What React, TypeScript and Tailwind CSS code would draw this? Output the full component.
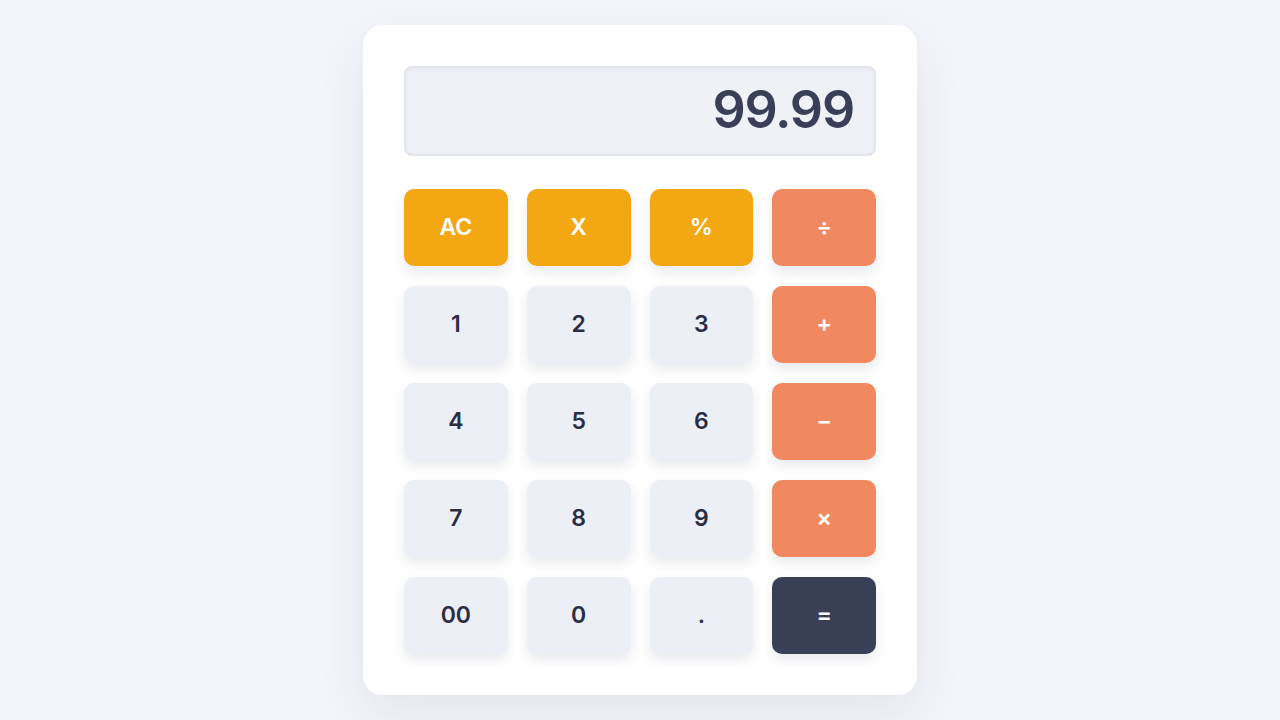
import React from "react";

type Key = { label: string; kind: "fn" | "op" | "num" | "eq" };

const keys: Key[] = [
  { label: "AC", kind: "fn" },
  { label: "X", kind: "fn" },
  { label: "%", kind: "fn" },
  { label: "÷", kind: "op" },
  { label: "1", kind: "num" },
  { label: "2", kind: "num" },
  { label: "3", kind: "num" },
  { label: "+", kind: "op" },
  { label: "4", kind: "num" },
  { label: "5", kind: "num" },
  { label: "6", kind: "num" },
  { label: "−", kind: "op" },
  { label: "7", kind: "num" },
  { label: "8", kind: "num" },
  { label: "9", kind: "num" },
  { label: "×", kind: "op" },
  { label: "00", kind: "num" },
  { label: "0", kind: "num" },
  { label: ".", kind: "num" },
  { label: "=", kind: "eq" },
];

const kindClass: Record<Key["kind"], string> = {
  fn: "bg-[#f3a813] text-white",
  op: "bg-[#f0895f] text-white",
  num: "bg-[#eceff6] text-[#2b2d42]",
  eq: "bg-[#3a3f58] text-white",
};

export default function App() {
  return (
    <div
      className="min-h-screen w-full bg-[#f4f5fa] flex justify-center pt-[25px]"
      style={{ fontFamily: "Inter, 'Open Sans', sans-serif" }}
    >
      <div className="w-[554px] h-[670px] bg-white rounded-[20px] p-[41px] shadow-[0_20px_50px_rgba(40,45,80,0.08)]">
        <div className="h-[90px] rounded-[8px] bg-[#eff1f6] border-2 border-[#e3e5ec] flex items-center justify-end pr-[20px] shadow-[inset_0_2px_4px_rgba(0,0,0,0.04)]">
          <span className="text-[52px] font-semibold text-[#3a3f58] leading-none tracking-[-1.2px] pb-[2px]">
            99.99
          </span>
        </div>
        <div className="mt-[33px] grid grid-cols-4 gap-x-[19px] gap-y-[20px]">
          {keys.map((k) => (
            <button
              key={k.label}
              className={`h-[77px] rounded-[10px] flex items-center justify-center text-[23px] font-semibold shadow-[0_6px_12px_rgba(40,45,80,0.10)] ${kindClass[k.kind]}`}
            >
              {k.label}
            </button>
          ))}
        </div>
      </div>
    </div>
  );
}
